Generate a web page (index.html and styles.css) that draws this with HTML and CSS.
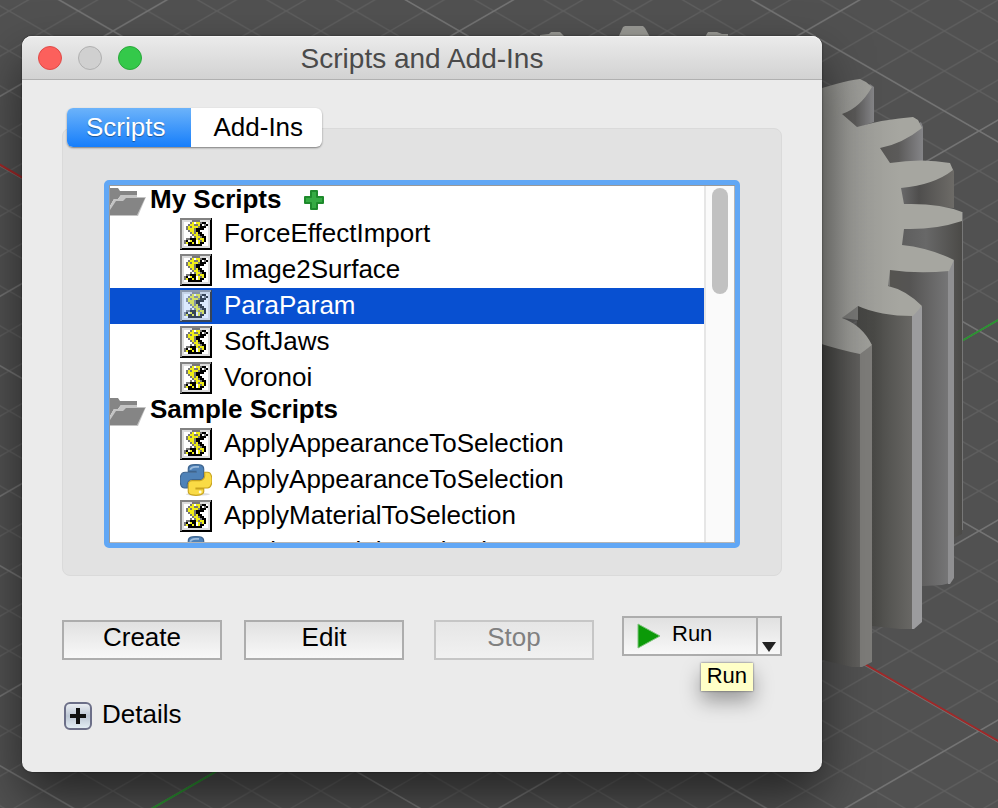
FILE: index.html
```html
<!DOCTYPE html>
<html lang="en">
<head>
<meta charset="utf-8">
<title>Scripts and Add-Ins</title>
<link rel="stylesheet" href="styles.css">
</head>
<body>
<svg class="scene" aria-hidden="true">
  <defs>
    <pattern id="grid" width="69.28" height="40" patternUnits="userSpaceOnUse" patternTransform="translate(979 131)">
      <path d="M0 0L69.28 40M0 40L69.28 0" stroke="#5e5e5e" stroke-width="1.5"/>
    </pattern>
    <pattern id="grid-major" width="346.4" height="200" patternUnits="userSpaceOnUse" patternTransform="translate(979 131)">
      <path d="M0 0L346.4 200M0 200L346.4 0" stroke="#747474" stroke-width="1.5"/>
    </pattern>
    <linearGradient id="face" gradientUnits="userSpaceOnUse" x1="822" y1="0" x2="900" y2="0">
      <stop offset="0" stop-color="#8c8c88"/><stop offset=".35" stop-color="#999995"/><stop offset="1" stop-color="#a6a6a0"/>
    </linearGradient>
    <linearGradient id="notch"><stop offset="0" stop-color="#565553"/><stop offset=".45" stop-color="#5b5a59"/><stop offset="1" stop-color="#858588"/></linearGradient>
    <linearGradient id="notch-dark"><stop offset="0" stop-color="#6b6b6c"/><stop offset=".35" stop-color="#4f4e4d"/><stop offset="1" stop-color="#6d6b67"/></linearGradient>
    <linearGradient id="rear"><stop offset="0" stop-color="#5e5e5e"/><stop offset=".4" stop-color="#686868"/><stop offset="1" stop-color="#4b4a47"/></linearGradient>
    <linearGradient id="side-a"><stop offset="0" stop-color="#555450"/><stop offset=".35" stop-color="#555453"/><stop offset="1" stop-color="#777778"/></linearGradient>
    <linearGradient id="side-b"><stop offset="0" stop-color="#454543"/><stop offset=".3" stop-color="#494946"/><stop offset="1" stop-color="#6a6966"/></linearGradient>
    <linearGradient id="side-c"><stop offset="0" stop-color="#454543"/><stop offset="1" stop-color="#62615f"/></linearGradient>
  </defs>
  <rect width="100%" height="100%" fill="#515151"/>
  <rect width="100%" height="100%" fill="url(#grid)"/>
  <rect width="100%" height="100%" fill="url(#grid-major)"/>
  <path d="M-21 152.600L979 730L1325.400 930" stroke="#a02828" stroke-width="2" fill="none"/>
  <path d="M0 896.300L979 331L1325.400 131" stroke="#2a9430" stroke-width="2" fill="none"/>
  <g fill="#9a9a95">
    <path d="M540 37V35l9-1 2-2h9l4 4v2z"/>
    <path d="M618 38l5-11 2-1h18l2 2 5 9z"/>
    <path d="M705 37l3-5h9l5 2h6v3z"/>
  </g>
  <path fill="url(#notch)" d="M840 114L870 84L874 87V122L857 128z"/>
  <path fill="url(#notch)" d="M878 148L921 122L923 127V161L890 164z"/>
  <path fill="url(#notch-dark)" d="M900 188L952 168L954 171V208L904 205z"/>
  <path fill="url(#rear)" d="M902 229L962 219V534L954 538L902 530z"/>
  <path stroke="#777" d="M962.500 212V530"/>
  <path fill="url(#side-a)" d="M888 268H950V583L942 585L924 586H888z"/>
  <path fill="#909092" d="M948 268L954 260V578L950 584H948z"/>
  <path fill="url(#side-b)" d="M856 305L914 314V629H900L872 626z"/>
  <path fill="#9c9c9e" d="M912 314L922 306V622L914 629H912z"/>
  <path fill="url(#side-c)" d="M822 342L862 351V667H852L822 660z"/>
  <path fill="#7d7c79" d="M860 352L872 345V662L862 667H860z"/>
  <path fill="#777775" d="M842 318L858 304V320zM880 284L890 270V286z"/>
  <path fill="url(#face)" d="M815 90L836 84Q850 80 860 79L866 82L872 87Q860 108 842 114L857 127Q885 119 913 117L918 120L922 128Q902 144 880 148L890 163Q922 158 950 163L953 170Q934 185 901 188L904 204Q940 203 962 212V221Q935 230 904 229L902 245Q930 248 954 260L949 271Q918 274 890 270L888 286Q906 290 922 306L913 316Q880 316 858 306L842 318Q862 325 872 345L860 354Q840 350 815 342z"/>
</svg>

<svg class="symbols" aria-hidden="true">
  <symbol id="script" viewBox="0 0 16 16">
    <g shape-rendering="crispEdges" fill="none">
      <path fill="#000" d="M0 0h16v16H0z"/>
      <path fill="#828282" d="M0 0h15.500v1H1V15.500H0z"/>
      <path fill="#dcdcdc" d="M1 1h14v14H1z"/>
      <path fill="#fff" d="M2 2h12v12H2z"/>
      <path stroke="#777" d="M6 1.500h4M5 2.500h1M10 2.500h1M4 3.500h1M7 3.500h2M12 3.500h1M3 4.500h1M5 4.500h1M9 4.500h1M3 5.500h1M7 5.500h1M4 6.500h1M7 6.500h1M5 7.500h1M7 7.500h1M6 8.500h1M9 8.500h1M5 9.500h1M7 9.500h1M10 9.500h1M3 10.500h2M9 10.500h1M2 11.500h1M10 11.500h1M2 12.500h1"/>
      <path stroke="#f0ee16" d="M6 2.500h1M8 2.500h2M5 3.500h2M9 3.500h1M4 4.500h1M6 4.500h3M4 5.500h3M5 6.500h2M6 7.500h1M8 7.500h1M7 8.500h2M8 9.500h2M8 10.500h1M10 10.500h2M5 11.500h1M9 11.500h1M11 11.500h1M3 12.500h1M6 12.500h1M9 12.500h1"/>
      <path stroke="#fff" d="M7 2.500h1M13 2.500h1M11 3.500h1M4 11.500h1"/>
      <path stroke="#000" d="M11 2.500h2M10 3.500h1M13 3.500h1M10 4.500h3M8 5.500h4M8 6.500h2M9 7.500h2M10 8.500h2M11 9.500h2M5 10.500h3M12 10.500h1M3 11.500h1M6 11.500h2M12 11.500h1M4 12.500h2M7 12.500h1M10 12.500h2M4 13.500h7"/>
    </g>
  </symbol>
  <symbol id="python" viewBox="0 0 111 111">
    <g stroke-width="4">
      <ellipse cx="62" cy="105" rx="42" ry="5" fill="#ddd"/>
      <path fill="#4f82b8" stroke="#3d648f" d="M54.900 2C50.300 2 46 2.400 42.100 3.100 30.800 5.100 28.700 9.300 28.700 17v8.200h26.800v3.400H18.700c-7.800 0-14.600 4.700-16.700 13.600-2.500 10.200-2.600 16.600 0 27.300 1.900 7.900 6.400 13.600 14.200 13.600h9.200V70.900c0-8.900 7.700-16.700 16.700-16.700h26.700c7.400 0 13.400-6.100 13.400-13.600V17c0-7.300-6.100-12.700-13.400-13.900C64.200 2.300 59.500 2 54.900 2z"/>
      <path fill="#fadb45" stroke="#c9a41f" d="M85.600 28.700v11.900c0 9.200-7.800 17-16.700 17H42.100c-7.300 0-13.400 6.300-13.400 13.600v24c0 7.300 6.300 10.500 13.400 12.100 8.500 2 16.600 2.400 26.800 0 6.800-2 13.400-5.400 13.400-12.100V86.500H55.500v-3.400h40.200c7.800 0 10.700-5.400 13.400-13.600 2.800-8.400 2.700-16.500 0-27.300-1.900-7.700-5.600-13.600-13.400-13.600H85.600z"/>
      <path fill="none" stroke="#9dbddd" stroke-width="6" d="M36 20q2-9 18-10h12"/>
      <circle cx="70" cy="97" r="5" fill="#fffbe0"/>
    </g>
  </symbol>
  <symbol id="folder" viewBox="0 0 36 30">
    <path fill="#858585" d="M0 2h8l2 3h17v4H11l-3 4H4L0 20z"/>
    <path fill="#c4c4c4" d="M0 20L4 13h4l3-4h16v2h9l-8 19H0z"/>
    <path fill="#858585" d="M0 24L6 15h7l3-3h19l-8 17H0z"/>
  </symbol>
</svg>

<main class="window">
  <header class="titlebar">
    <div class="lights">
      <button class="light close" aria-label="Close"></button>
      <button class="light minimize" aria-label="Minimize" disabled></button>
      <button class="light zoom" aria-label="Zoom"></button>
    </div>
    <h1>Scripts and Add-Ins</h1>
  </header>

  <div class="content">
    <div class="tabs" role="tablist">
      <button class="tab active" role="tab" aria-selected="true">Scripts</button>
      <button class="tab" role="tab" aria-selected="false">Add-Ins</button>
    </div>

    <section class="panel">
      <div class="tree">
        <div class="tree-body">
          <h2 class="group"><svg class="folder"><use href="#folder"/></svg>My Scripts
            <button class="add" aria-label="Add script"><svg viewBox="0 0 22 22"><path fill="#35ab43" stroke="#1e8a2c" stroke-width="2" stroke-linejoin="round" d="M8 2h6v6h6v6h-6v6H8v-6H2V8h6z"/></svg></button>
          </h2>
          <ul>
            <li><svg class="icon"><use href="#script"/></svg>ForceEffectImport</li>
            <li><svg class="icon"><use href="#script"/></svg>Image2Surface</li>
            <li class="selected"><svg class="icon"><use href="#script"/></svg>ParaParam</li>
            <li><svg class="icon"><use href="#script"/></svg>SoftJaws</li>
            <li><svg class="icon"><use href="#script"/></svg>Voronoi</li>
          </ul>
          <h2 class="group"><svg class="folder"><use href="#folder"/></svg>Sample Scripts</h2>
          <ul>
            <li><svg class="icon"><use href="#script"/></svg>ApplyAppearanceToSelection</li>
            <li><svg class="icon"><use href="#python"/></svg>ApplyAppearanceToSelection</li>
            <li><svg class="icon"><use href="#script"/></svg>ApplyMaterialToSelection</li>
            <li><svg class="icon"><use href="#python"/></svg>ApplyMaterialToSelection</li>
          </ul>
        </div>
        <div class="track"><div class="thumb"></div></div>
      </div>
    </section>

    <div class="actions">
      <button class="btn">Create</button>
      <button class="btn">Edit</button>
      <button class="btn stop" disabled>Stop</button>
      <div class="run">
        <button class="run-main"><svg viewBox="0 0 24 26"><path fill="#0b9a08" stroke="#7cc47a" d="M1 1L23 13L1 25z"/></svg>Run</button>
        <button class="run-menu" aria-label="Run options"><svg viewBox="0 0 14 10"><path fill="#222" d="M0 0h14L7 10z"/></svg></button>
        <div class="tooltip" role="tooltip">Run</div>
      </div>
    </div>

    <button class="details">
      <svg viewBox="0 0 28 28">
        <defs><linearGradient id="plate" x2="0" y2="1"><stop offset="0" stop-color="#eef1f5"/><stop offset=".5" stop-color="#bcc6d4"/><stop offset="1" stop-color="#e6f0f6"/></linearGradient></defs>
        <rect x="1" y="1" width="26" height="26" rx="5" fill="url(#plate)" stroke="#6c6f88" stroke-width="2"/>
        <path d="M14 6v16M6 14h16" stroke="#111" stroke-width="4"/>
      </svg>Details
    </button>
  </div>
</main>
</body>
</html>
```
FILE: styles.css
```css
* { box-sizing: border-box; }

body {
  margin: 0;
  min-height: 100vh;
  padding: 36px 176px 36px 22px;
  background: #515151;
  color: #000;
  font: 26px/30px "Liberation Sans", Arial, sans-serif;
}

button {
  margin: 0;
  padding: 0;
  border: 0;
  background: none;
  color: inherit;
  font: inherit;
}

svg { display: block; flex: none; }

.scene {
  position: absolute;
  inset: 0;
  width: 100%;
  height: 100%;
}

.symbols { position: absolute; width: 0; height: 0; }

.window {
  position: relative;
  border-radius: 10px;
  background: #ebebeb;
  box-shadow: 0 0 2px rgba(0, 0, 0, .6), 0 24px 50px rgba(0, 0, 0, .55);
}

.titlebar {
  display: grid;
  grid-template-columns: 1fr auto 1fr;
  align-items: center;
  height: 44px;
  padding: 0 16px;
  border-bottom: 1px solid #b0b0b0;
  border-radius: 10px 10px 0 0;
  background: linear-gradient(#ebebeb, #d2d2d2);
  box-shadow: inset 0 1px #f6f6f6;
}

.titlebar h1 {
  margin: 0;
  padding-top: 2px;
  color: #4a4a4a;
  font-size: 28px;
  font-weight: 400;
}

.lights { display: flex; gap: 16px; }

.light {
  width: 24px;
  height: 24px;
  border: 1px solid;
  border-radius: 50%;
}

.close { border-color: #e04a47; background: #fc605c; }
.minimize { border-color: #b0b0b0; background: #d0d0d0; }
.zoom { border-color: #29a83a; background: #34c94a; }

.content { padding: 28px 40px 42px; }

.tabs {
  position: relative;
  display: flex;
  width: max-content;
  margin: 0 0 -19px 5px;
  border-radius: 6px;
  background: #fff;
  box-shadow: 0 1px 2px rgba(0, 0, 0, .45);
}

.tab {
  height: 39px;
  padding: 0 19px 2px 22px;
}

.tab.active {
  padding: 0 26px 2px 19px;
  border-radius: 6px 0 0 6px;
  background: linear-gradient(#6cb3fa, #167efb);
  color: #fff;
  text-shadow: 0 1px 1px rgba(0, 0, 0, .4);
}

.panel {
  padding: 51px 41px 27px;
  border: 1px solid #dadada;
  border-radius: 8px;
  background: #e2e2e2;
}

.tree {
  display: flex;
  height: 368px;
  overflow: hidden;
  border: 5px solid #61a7f5;
  border-radius: 5px;
  background: #fff;
  box-shadow: inset 1px 1px #999, inset -1px -1px #b5b5b5;
}

.tree-body {
  flex: 1;
  height: 356px;
  margin: 1px 0 1px 1px;
  overflow: hidden;
}

.group {
  display: flex;
  align-items: flex-start;
  gap: 4px;
  height: 30px;
  margin: 0;
  font-size: 26px;
  line-height: 26px;
}

.folder { width: 36px; height: 30px; }

.add { margin: 3px 0 0 17px; }
.add svg { width: 22px; height: 22px; }

ul { margin: 0; padding: 0; list-style: none; }

li {
  display: flex;
  align-items: flex-start;
  gap: 12px;
  height: 36px;
  padding-left: 70px;
  line-height: 34px;
}

.icon { width: 32px; height: 32px; margin-top: 2px; }

.selected { background: #0850d1; color: #fff; }
.selected .icon { background: #9cc4ff; }
.selected use { opacity: .65; }

.track {
  width: 30px;
  margin: 1px 1px 1px 0;
  padding: 2px 6px;
  border-left: 2px solid #e6e6e6;
  background: #fafafa;
}

.thumb {
  width: 16px;
  height: 106px;
  border-radius: 8px;
  background: #c1c1c1;
}

.actions {
  display: flex;
  gap: 22px;
  margin-top: 40px;
}

.btn,
.run {
  width: 160px;
  height: 40px;
  border: 2px solid #adadad;
  background: linear-gradient(#e1e1e1, #f8f8f8);
}

.btn {
  margin-top: 4px;
  padding-bottom: 6px;
}

.stop { margin-left: 8px; }

.btn:disabled {
  border-color: #c6c6c6;
  background: linear-gradient(#e6e6e6, #f1f1f1);
  color: #808080;
}

.run {
  position: relative;
  display: flex;
  margin-left: auto;
  font-size: 22px;
}

.run-main {
  display: flex;
  flex: 1;
  align-items: center;
  gap: 11px;
  padding: 0 0 4px 13px;
  line-height: 32px;
}

.run-main svg { width: 24px; height: 26px; margin-top: 4px; }

.run-menu {
  display: flex;
  align-items: flex-end;
  justify-content: center;
  width: 24px;
  padding-bottom: 2px;
  border-left: 2px solid #adadad;
}

.run-menu svg { width: 14px; height: 10px; }

.tooltip {
  position: absolute;
  top: 45px;
  right: 27px;
  padding: 0 6px 2px;
  background: #ffffc7;
  line-height: 26px;
  box-shadow: 0 0 2px rgba(0, 0, 0, .6), 0 10px 20px rgba(0, 0, 0, .35);
}

.details {
  display: flex;
  align-items: center;
  gap: 10px;
  margin: 38px 0 0 2px;
}

.details svg { width: 28px; height: 28px; margin-top: 4px; }
```
